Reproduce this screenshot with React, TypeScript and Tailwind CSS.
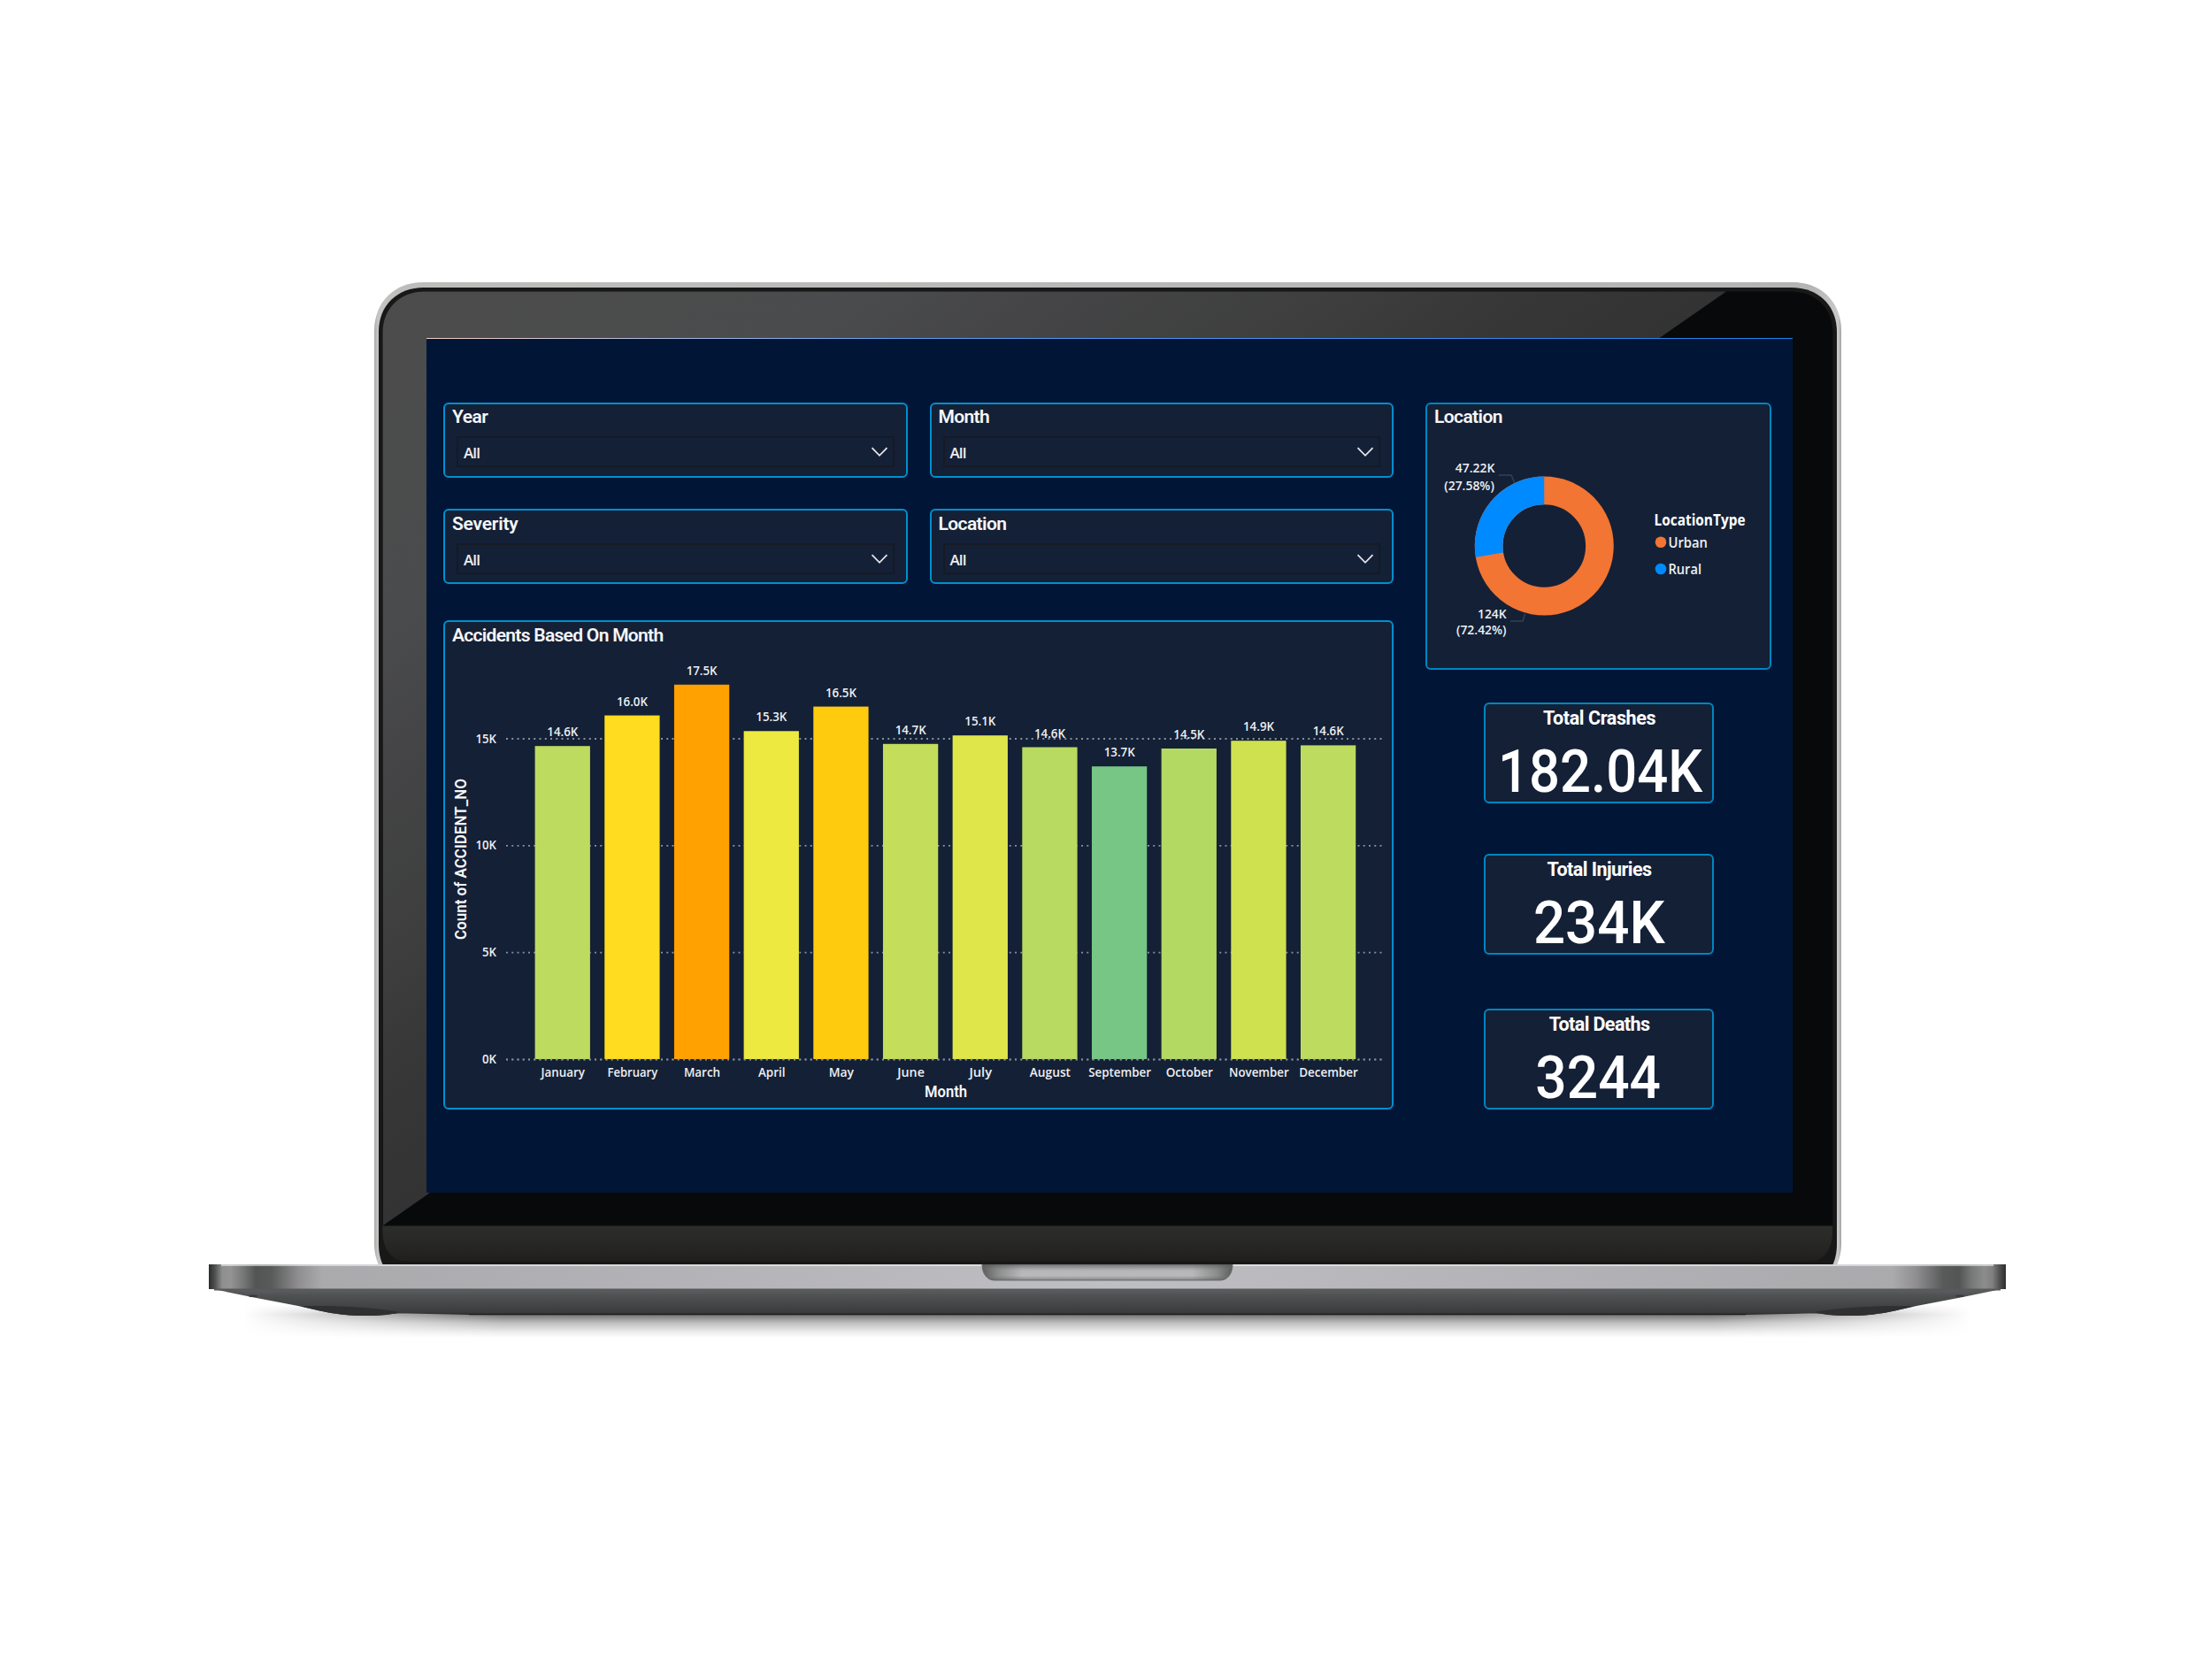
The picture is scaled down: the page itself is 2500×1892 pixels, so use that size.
import React from 'react';

const MONTHS = [
  { name: 'January', label: '14.6K', top: 843.2, color: '#bddb5f', width: 49.4 },
  { name: 'February', label: '16.0K', top: 808.6, color: '#ffdc1f', width: 56.6 },
  { name: 'March', label: '17.5K', top: 773.8, color: '#ffa100', width: 41.3 },
  { name: 'April', label: '15.3K', top: 826.3, color: '#ede941', width: 30.6 },
  { name: 'May', label: '16.5K', top: 798.6, color: '#ffcb0e', width: 28.3 },
  { name: 'June', label: '14.7K', top: 840.8, color: '#c4dd5a', width: 30.6 },
  { name: 'July', label: '15.1K', top: 831.2, color: '#dfe649', width: 25.6 },
  { name: 'August', label: '14.6K', top: 844.5, color: '#b8da60', width: 46.3 },
  { name: 'September', label: '13.7K', top: 866.2, color: '#77c685', width: 70.8 },
  { name: 'October', label: '14.5K', top: 846, color: '#b3d963', width: 53.2 },
  { name: 'November', label: '14.9K', top: 837.2, color: '#d0e150', width: 67.7 },
  { name: 'December', label: '14.6K', top: 842.4, color: '#bddb5f', width: 66.6 },
];

const TICKS = [
  { label: '15K', y: 835, width: 23.5 },
  { label: '10K', y: 955.8, width: 23.5 },
  { label: '5K', y: 1076.7, width: 16 },
  { label: '0K', y: 1197.5, width: 16 },
];

const LaptopFrame: React.FC = () => (
  <svg className="absolute inset-0" width="2500" height="1892" viewBox="0 0 2500 1892" fill="none">
    <defs>
      <linearGradient id="rim" x1="423" x2="2081" y1="0" y2="0" gradientUnits="userSpaceOnUse">
        <stop offset="0" stopColor="#a9a9a8" />
        <stop offset="0.0022" stopColor="#c4c4c2" />
        <stop offset="0.02" stopColor="#bdbdbc" />
        <stop offset="0.98" stopColor="#b4b4b4" />
        <stop offset="0.998" stopColor="#c9c9c9" />
        <stop offset="1" stopColor="#a0a0a0" />
      </linearGradient>
      <linearGradient id="glare" x1="433" y1="329" x2="927" y2="1040" gradientUnits="userSpaceOnUse">
        <stop offset="0" stopColor="#4c4c4c" />
        <stop offset="0.37" stopColor="#4a4b4c" />
        <stop offset="0.5" stopColor="#454547" />
        <stop offset="0.7" stopColor="#3e3f3e" />
        <stop offset="0.85" stopColor="#373737" />
        <stop offset="1" stopColor="#323332" />
      </linearGradient>
      <linearGradient id="chin" x1="0" x2="0" y1="1385" y2="1427" gradientUnits="userSpaceOnUse">
        <stop offset="0" stopColor="#2d2d2c" />
        <stop offset="0.5" stopColor="#272725" />
        <stop offset="1" stopColor="#1f1e1c" />
      </linearGradient>
      <linearGradient id="base" x1="236" x2="2267" y1="0" y2="0" gradientUnits="userSpaceOnUse">
        <stop offset="0" stopColor="#2b2c2c" />
        <stop offset="0.003" stopColor="#4a4b4b" />
        <stop offset="0.0075" stopColor="#8f8f90" />
        <stop offset="0.012" stopColor="#949495" />
        <stop offset="0.019" stopColor="#777878" />
        <stop offset="0.026" stopColor="#535554" />
        <stop offset="0.035" stopColor="#595a5a" />
        <stop offset="0.05" stopColor="#8f8f91" />
        <stop offset="0.063" stopColor="#aaaaad" />
        <stop offset="0.3" stopColor="#b5b5b9" />
        <stop offset="0.5" stopColor="#bfbec3" />
        <stop offset="0.7" stopColor="#b5b5b9" />
        <stop offset="0.937" stopColor="#aaaaad" />
        <stop offset="0.95" stopColor="#8f8f91" />
        <stop offset="0.965" stopColor="#595a5a" />
        <stop offset="0.974" stopColor="#535554" />
        <stop offset="0.981" stopColor="#777878" />
        <stop offset="0.988" stopColor="#8c8c8d" />
        <stop offset="0.9925" stopColor="#808081" />
        <stop offset="0.997" stopColor="#4a4b4b" />
        <stop offset="1" stopColor="#2b2c2c" />
      </linearGradient>
      <linearGradient id="under" x1="0" x2="0" y1="1457" y2="1486" gradientUnits="userSpaceOnUse">
        <stop offset="0" stopColor="#5e5f60" />
        <stop offset="0.25" stopColor="#505152" />
        <stop offset="0.9" stopColor="#3b3c3c" />
        <stop offset="1" stopColor="#2a2a2a" />
      </linearGradient>
      <linearGradient id="shadow" x1="0" x2="0" y1="1474" y2="1512" gradientUnits="userSpaceOnUse">
        <stop offset="0" stopColor="#000" stopOpacity="0" />
        <stop offset="0.31" stopColor="#000" stopOpacity="0.55" />
        <stop offset="0.55" stopColor="#000" stopOpacity="0.26" />
        <stop offset="0.82" stopColor="#000" stopOpacity="0.08" />
        <stop offset="1" stopColor="#000" stopOpacity="0" />
      </linearGradient>
      <linearGradient id="sides" x1="275" x2="2228" y1="0" y2="0" gradientUnits="userSpaceOnUse">
        <stop offset="0" stopColor="#000" />
        <stop offset="0.03" stopColor="#333" />
        <stop offset="0.08" stopColor="#8a8a8a" />
        <stop offset="0.15" stopColor="#fff" />
        <stop offset="0.85" stopColor="#fff" />
        <stop offset="0.92" stopColor="#8a8a8a" />
        <stop offset="0.97" stopColor="#333" />
        <stop offset="1" stopColor="#000" />
      </linearGradient>
      <mask id="fade" maskUnits="userSpaceOnUse" x="200" y="1440" width="2100" height="100">
        <rect x="200" y="1440" width="2100" height="100" fill="url(#sides)" />
      </mask>
      <linearGradient id="notch" x1="1110" x2="1393" y1="0" y2="0" gradientUnits="userSpaceOnUse">
        <stop offset="0" stopColor="#585959" />
        <stop offset="0.06" stopColor="#8b8c8c" />
        <stop offset="0.16" stopColor="#bdbdc0" />
        <stop offset="0.84" stopColor="#bdbdc0" />
        <stop offset="0.94" stopColor="#8b8c8c" />
        <stop offset="1" stopColor="#585959" />
      </linearGradient>
      <linearGradient id="notchShade" x1="0" x2="0" y1="1429" y2="1447" gradientUnits="userSpaceOnUse">
        <stop offset="0" stopColor="#555" stopOpacity="0.75" />
        <stop offset="0.4" stopColor="#777" stopOpacity="0.1" />
        <stop offset="0.7" stopColor="#777" stopOpacity="0.05" />
        <stop offset="1" stopColor="#555" stopOpacity="0.6" />
      </linearGradient>
    </defs>

    {/* Lid */}
    <path d="M423 374C423 341 446 319 478 319H2026C2058 319 2081 341 2081 374V1405C2081 1415 2079 1423 2076 1430H428C425 1423 423 1415 423 1405Z" fill="url(#rim)" />
    <path d="M428 375C428 345 449 325 479 325H2025C2055 325 2076 345 2076 375V1406C2076 1416 2074 1424 2071 1430H433C430 1424 428 1416 428 1406Z" fill="#171817" />
    <path d="M432.5 377C432.5 348 452 329.5 480 329.5H2024C2052 329.5 2071.5 348 2071.5 377V1385H432.5Z" fill="#08090a" />
    <path d="M432.5 377C432.5 348 452 329.5 480 329.5H1951L486 1348L433 1385Z" fill="url(#glare)" />
    <path d="M432.5 1385H2071V1392C2071 1412 2061 1425.5 2046 1425.5H458C443 1425.5 432.5 1412 432.5 1392Z" fill="url(#chin)" />
    <path d="M433 1385.3H2071" stroke="#161717" strokeWidth="1" />

    {/* Shadow on the table */}
    <path d="M260 1474H2243V1512H260Z" fill="url(#shadow)" mask="url(#fade)" />

    {/* Base */}
    <path d="M236 1456L286 1466.3L337 1476C360 1481 380 1487 412 1487C435 1487 440 1484 460 1484.5L530 1486H1973L2043 1484.5C2063 1484 2068 1487 2091 1487C2123 1487 2143 1481 2166 1476L2217 1466.3L2267 1456Z" fill="url(#under)" />
    <path d="M340 1476.5C370 1475 420 1477 452 1483C440 1487 425 1487 412 1487C380 1487 360 1481 340 1476.5Z" fill="#2f3030" />
    <path d="M2163 1476.5C2133 1475 2083 1477 2051 1483C2063 1487 2078 1487 2091 1487C2123 1487 2143 1481 2163 1476.5Z" fill="#2f3030" />
    <path d="M530 1485.6H1973" stroke="#1c1c1c" strokeWidth="1.3" />
    <rect x="236" y="1429" width="2031" height="28" fill="url(#base)" />
    <path d="M250 1430H2253" stroke="#f4f4f4" strokeWidth="1.4" opacity="0.8" />
    <path d="M242 1457.5H2261" stroke="#58595a" strokeWidth="2" />
    <ellipse cx="286" cy="1464.8" rx="5" ry="1.2" fill="#3a3a3a" />
    <ellipse cx="2215" cy="1464.8" rx="5" ry="1.2" fill="#3a3a3a" />
    <path d="M1110 1429H1393C1393 1440 1387 1447 1379 1447H1124C1116 1447 1110 1440 1110 1429Z" fill="url(#notch)" />
    <path d="M1110 1429H1393C1393 1440 1387 1447 1379 1447H1124C1116 1447 1110 1440 1110 1429Z" fill="url(#notchShade)" />
    <path d="M1110 1429C1110 1440 1116 1447 1124 1447H1379C1387 1447 1393 1440 1393 1429" stroke="#6b6c6c" strokeWidth="1" />
  </svg>
);

const Slicer: React.FC<{ title: string; padding: string; tracking: string }> = ({ title, padding, tracking }) => (
  <div className={`h-[85px] rounded-md border-2 border-[#018fce] bg-[#142036] pr-[13px] pl-[13px] ${padding}`}>
    <h2 className={`-ml-[5px] h-9 pt-px text-[21px] leading-[26px] font-semibold text-[#f6f7f8] ${tracking}`}>{title}</h2>
    <div className="flex h-[35px] items-center justify-between border-2 border-[#151a25] pr-[5px] pl-[6px]">
      <span className="pt-[2px] font-['Open_Sans'] text-[17px] leading-[20px] font-semibold tracking-[-0.9px] text-[#ededef]">All</span>
      <svg width="20" height="12" viewBox="0 0 20 12" fill="none">
        <path d="M1.5 1.2L10 9.8L18.5 1.2" stroke="#e3e5e8" strokeWidth="1.8" />
      </svg>
    </div>
  </div>
);

const MonthChart: React.FC = () => (
  <svg
    className="block font-['Open_Sans']"
    width="1070"
    height="515"
    viewBox="503 737 1070 515"
    fill="#eef0f2"
    fontSize="14"
    fontWeight="600"
  >
    {TICKS.map((tick) => (
      <g key={tick.label}>
        <text x="561" y={tick.y + 4.5} textAnchor="end" textLength={tick.width} lengthAdjust="spacingAndGlyphs">
          {tick.label}
        </text>
        <line x1="572" x2="1565" y1={tick.y} y2={tick.y} stroke="#87909c" strokeWidth="1.8" strokeDasharray="2 4.25" />
      </g>
    ))}
    {MONTHS.map((month, i) => {
      const x = 604.6 + i * 78.67;
      return (
        <g key={month.name}>
          <rect x={x} y={month.top} width="62.3" height={1197 - month.top} fill={month.color} />
          <text x={x + 31.2} y={month.top - 11} textAnchor="middle" textLength="35" lengthAdjust="spacingAndGlyphs">
            {month.label}
          </text>
          <text x={x + 31.6} y="1216.7" textAnchor="middle" textLength={month.width} lengthAdjust="spacingAndGlyphs">
            {month.name}
          </text>
        </g>
      );
    })}
    <line x1="572" x2="1565" y1="1197.5" y2="1197.5" stroke="#87909c" strokeWidth="1.6" strokeDasharray="2 4.25" />
    <g className="font-[Roboto]" fontSize="17.5" fontWeight="600" fill="#f6f7f8">
      <text x="1069" y="1240" textAnchor="middle" textLength="48" lengthAdjust="spacingAndGlyphs">Month</text>
      <text transform="translate(527 971) rotate(-90)" textAnchor="middle" textLength="182" lengthAdjust="spacingAndGlyphs">
        Count of ACCIDENT_NO
      </text>
    </g>
  </svg>
);

const LocationDonut: React.FC = () => (
  <svg
    className="block font-['Open_Sans']"
    width="387"
    height="260"
    viewBox="1613 491 387 260"
    fill="#eef0f2"
    fontSize="15"
    fontWeight="600"
  >
    <circle cx="1745.3" cy="617" r="62.65" fill="none" stroke="#f27533" strokeWidth="31.7" />
    <circle
      cx="1745.3"
      cy="617"
      r="62.65"
      fill="none"
      stroke="#008aff"
      strokeWidth="31.7"
      pathLength="100"
      strokeDasharray="27.58 72.42"
      transform="rotate(170.71 1745.3 617)"
    />
    <path d="M1694 537H1708L1712 546M1707 702H1721L1723.5 694" fill="none" stroke="#334151" strokeWidth="1.5" />
    <text x="1689.3" y="533.5" textAnchor="end" textLength="44.5" lengthAdjust="spacingAndGlyphs">47.22K</text>
    <text x="1688.8" y="553.7" textAnchor="end" textLength="56.5" lengthAdjust="spacingAndGlyphs">(27.58%)</text>
    <text x="1702.5" y="698.5" textAnchor="end" textLength="32.5" lengthAdjust="spacingAndGlyphs">124K</text>
    <text x="1702.5" y="717.4" textAnchor="end" textLength="56.5" lengthAdjust="spacingAndGlyphs">(72.42%)</text>
    <text x="1869.5" y="593.8" textLength="103" lengthAdjust="spacingAndGlyphs" fontSize="17" fontWeight="700" fill="#ffffff">LocationType</text>
    <circle cx="1877" cy="612.7" r="6.3" fill="#f27533" />
    <text x="1885.5" y="618.8" textLength="44.5" lengthAdjust="spacingAndGlyphs" fontSize="17">Urban</text>
    <circle cx="1877" cy="643" r="6.3" fill="#008aff" />
    <text x="1885.5" y="648.8" textLength="37.5" lengthAdjust="spacingAndGlyphs" fontSize="17">Rural</text>
  </svg>
);

const StatCard: React.FC<{ title: string; value: string; titleClass: string; valueClass: string }> = ({
  title,
  value,
  titleClass,
  valueClass,
}) => (
  <div className="flex h-[114px] w-[260px] flex-col items-center rounded-md border-2 border-[#0185c0] bg-[#142036] whitespace-nowrap text-white">
    <h2 className={`pt-[3px] pl-px text-[21.5px] leading-[26px] font-bold ${titleClass}`}>{title}</h2>
    <p className={`pt-[11px] text-[67px] leading-[72px] font-medium ${valueClass}`}>{value}</p>
  </div>
);

const App: React.FC = () => (
  <div className="relative h-[1892px] w-[2500px] overflow-hidden bg-white pt-[382px] pl-[482px] font-[Roboto,sans-serif]">
    <LaptopFrame />
    <main className="relative h-[966px] w-[1544px] bg-[#011637]">
      <div className="h-px bg-linear-to-r from-[#f6cfc2] via-[#5f9df2] via-35% to-[#1f80ea]" />
      <div className="flex gap-9 pt-[72px] pl-[19px]">
        <section className="w-[1074px]">
          <div className="grid grid-cols-2 gap-x-[25px] gap-y-[35px]">
            <Slicer title="Year" padding="pt-0" tracking="tracking-[-0.5px]" />
            <Slicer title="Month" padding="pt-0" tracking="tracking-[-0.65px]" />
            <Slicer title="Severity" padding="pt-px" tracking="tracking-[-0.2px]" />
            <Slicer title="Location" padding="pt-px" tracking="tracking-[-0.6px]" />
          </div>
          <div className="mt-[41px] h-[553px] rounded-md border-2 border-[#018fce] bg-[#142036]">
            <h2 className="h-[34px] pt-[2px] pl-2 text-[21px] leading-[26px] font-semibold tracking-[-0.7px] text-[#f6f7f8]">
              Accidents Based On Month
            </h2>
            <MonthChart />
          </div>
        </section>
        <aside className="w-[391px]">
          <div className="h-[302px] rounded-md border-2 border-[#0185c0] bg-[#142036]">
            <h2 className="h-[34px] pt-px pl-2 text-[21px] leading-[26px] font-semibold tracking-[-0.6px] text-[#f6f7f8]">Location</h2>
            <LocationDonut />
          </div>
          <div className="mt-[37px] ml-[66px]">
            <StatCard title="Total Crashes" value="182.04K" titleClass="tracking-[-0.4px]" valueClass="pl-[3px] scale-x-[0.92]" />
            <div className="pt-[57px]">
              <StatCard title="Total Injuries" value="234K" titleClass="tracking-[-0.55px]" valueClass="scale-x-[0.95]" />
            </div>
            <div className="pt-[61px]">
              <StatCard title="Total Deaths" value="3244" titleClass="tracking-[-0.6px]" valueClass="pr-px scale-x-[0.93]" />
            </div>
          </div>
        </aside>
      </div>
    </main>
  </div>
);

export default App;
